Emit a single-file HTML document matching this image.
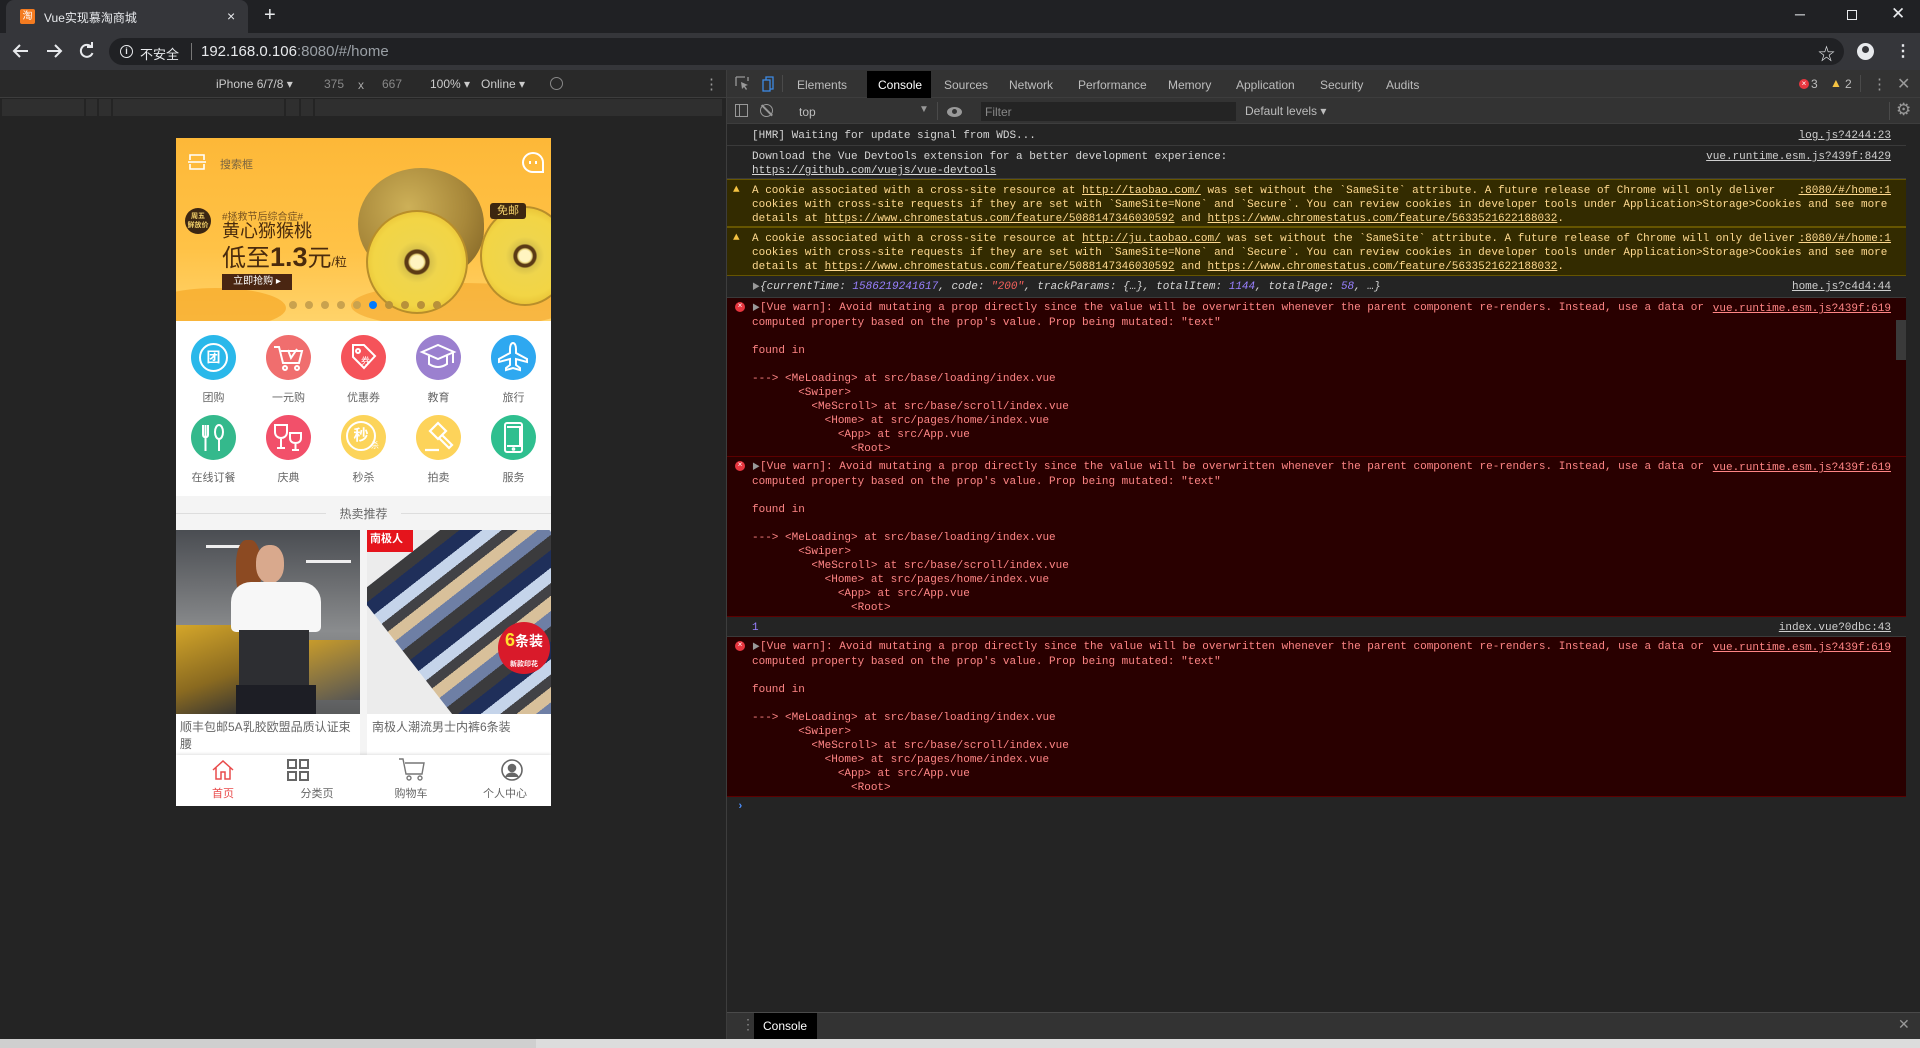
<!DOCTYPE html>
<html><head><meta charset="utf-8">
<style>
*{margin:0;padding:0;box-sizing:border-box}
body{width:1920px;height:1048px;overflow:hidden;background:#242424;font-family:"Liberation Sans","Noto Sans CJK SC",sans-serif;position:relative}
.a{position:absolute}
.ui{font-size:12px;color:#bdbdbd;white-space:nowrap}
.mono{font-family:"Liberation Mono","Noto Sans CJK SC",monospace;font-size:11px;line-height:14px;white-space:pre}
.row{position:absolute;left:727px;right:14px;padding:4px 0 3px 25px}
.n{color:#d6d6d6;border-bottom:1px solid #3a3a3a}
.w{background:#332b00;color:#ffd98f;border-top:1px solid #665500;border-bottom:1px solid #665500}
.e{background:#290000;color:#ff8585;border-bottom:1px solid #5c0000;padding-top:3px}
.lk{position:absolute;right:15px;top:4px;text-decoration:underline;color:#cfcfcf}
.e .lk,.w .lk{color:inherit}
u{text-decoration:underline}
.ic{position:absolute;width:45px;height:45px;border-radius:50%}
.lbl{position:absolute;width:75px;text-align:center;font-size:11px;color:#666}
.flesh{position:absolute;border-radius:50%;background:radial-gradient(circle,#fff4c0 0 9%,#e8d47a 11%,#5b3a15 13% 17%,#d9c24a 19%,#efd54c 30%,#f2d545 62%,#e4b92f 85%,#c99a26 100%)}
</style></head><body>

<!-- tab strip -->
<div class="a" style="left:0;top:0;width:1920px;height:33px;background:#202124"></div>
<div class="a" style="left:6px;top:0;width:242px;height:33px;background:#35363a;border-radius:8px 8px 0 0"></div>
<div class="a" style="left:20px;top:9px;width:15px;height:15px;background:#f47b20;border-radius:2px;color:#fff;font-size:10px;line-height:15px;text-align:center">淘</div>
<div class="a ui" style="left:44px;top:9px;color:#e8eaed">Vue实现慕淘商城</div>
<div class="a ui" style="left:227px;top:8px;color:#e8eaed;font-size:14px">×</div>
<div class="a ui" style="left:264px;top:4px;color:#e8eaed;font-size:20px">+</div>
<div class="a ui" style="left:1795px;top:6px;color:#e8eaed;font-size:14px">─</div>
<div class="a" style="left:1847px;top:10px;width:10px;height:10px;border:1px solid #e8eaed"></div>
<div class="a ui" style="left:1891px;top:4px;color:#e8eaed;font-size:17px">✕</div>

<!-- address bar -->
<div class="a" style="left:0;top:33px;width:1920px;height:37px;background:#35363a"></div>
<svg class="a" style="left:0;top:33px" width="108" height="37" viewBox="0 0 108 37" fill="none" stroke="#e8eaed" stroke-width="2"><path d="M28 18H14M20 12l-6 6 6 6"/><path d="M47 18h14M55 12l6 6-6 6"/><path d="M91 13.5a6 6 0 1 0 1.5 6.5"/><path d="M92 9v5h-5"/></svg>
<div class="a" style="left:109px;top:38px;width:1735px;height:27px;background:#202124;border-radius:14px"></div>
<div class="a" style="left:120px;top:45px;width:13px;height:13px;border:1.5px solid #e8eaed;border-radius:50%;color:#e8eaed;font-size:9px;line-height:10px;text-align:center;font-weight:bold">i</div>
<div class="a ui" style="left:140px;top:44px;color:#e8eaed;font-size:13px">不安全</div>
<div class="a" style="left:191px;top:43px;width:1px;height:17px;background:#777"></div>
<div class="a ui" style="left:201px;top:43px;font-size:15px;color:#e8eaed">192.168.0.106<span style="color:#9aa0a6">:8080/#/home</span></div>
<div class="a ui" style="left:1818px;top:40px;color:#e8eaed;font-size:17px">☆</div>
<div class="a" style="left:1857px;top:43px;width:17px;height:17px;border-radius:50%;background:#e8eaed"></div>
<div class="a" style="left:1862px;top:46px;width:7px;height:7px;border-radius:50%;background:#35363a"></div>
<div class="a ui" style="left:1895px;top:41px;color:#e8eaed;font-size:16px;font-weight:bold">⋮</div>

<!-- left device area -->
<div class="a" style="left:0;top:70px;width:726px;height:28px;background:#292929;border-bottom:1px solid #3d3d3d"></div>
<div class="a ui" style="left:216px;top:77px;color:#ccc">iPhone 6/7/8 ▾</div>
<div class="a ui" style="left:324px;top:77px;color:#888">375</div>
<div class="a ui" style="left:358px;top:78px;color:#aaa">x</div>
<div class="a ui" style="left:382px;top:77px;color:#888">667</div>
<div class="a ui" style="left:430px;top:77px;color:#ccc">100% ▾</div>
<div class="a ui" style="left:481px;top:77px;color:#ccc">Online ▾</div>
<div class="a" style="left:550px;top:77px;width:13px;height:13px;border:1.5px solid #888;border-radius:50%;transform:rotate(45deg)"></div>
<div class="a ui" style="left:704px;top:75px;color:#999;font-size:15px">⋮</div>
<div class="a" style="left:2px;top:99px;width:720px;height:17px;background:#2f2f2f"></div>
<div class="a" style="left:84px;top:99px;width:2px;height:17px;background:#242424"></div>
<div class="a" style="left:97px;top:99px;width:2px;height:17px;background:#242424"></div>
<div class="a" style="left:111px;top:99px;width:2px;height:17px;background:#242424"></div>
<div class="a" style="left:284px;top:99px;width:2px;height:17px;background:#242424"></div>
<div class="a" style="left:299px;top:99px;width:2px;height:17px;background:#242424"></div>
<div class="a" style="left:313px;top:99px;width:2px;height:17px;background:#242424"></div>

<!-- PHONE -->
<div class="a" style="left:176px;top:138px;width:375px;height:668px;background:#fff;overflow:hidden">
  <!-- banner -->
  <div class="a" style="left:0;top:0;width:375px;height:183px;background:linear-gradient(180deg,#fdb838 0%,#ffc246 60%,#ffd36a 100%);overflow:hidden">
    <div class="a" style="left:-30px;top:150px;width:140px;height:40px;border-radius:50%;background:#f6a826;opacity:.7"></div>
    <div class="a" style="left:175px;top:145px;width:220px;height:45px;border-radius:50%;background:#f3a52a;opacity:.6"></div>
    <div class="a" style="left:182px;top:30px;width:126px;height:112px;border-radius:50% 50% 45% 50%;background:radial-gradient(circle at 40% 35%,#cdb058,#a8883a 55%,#7f6224 95%)"></div>
    <div class="flesh" style="left:190px;top:72px;width:102px;height:104px;border:2px solid #b88e2a"></div>
    <div class="flesh" style="left:304px;top:68px;width:90px;height:100px;border:2px solid #b88e2a"></div>
    <div class="a" style="left:314px;top:65px;width:36px;height:16px;background:#3d2710;border-radius:3px;color:#f5d36c;font-size:11px;line-height:16px;text-align:center">免邮</div>
  </div>
  <svg class="a" style="left:11px;top:14px" width="20" height="20" viewBox="0 0 20 20" fill="none" stroke="#fff" stroke-width="1.6"><path d="M3 8V3h14v5M3 12v5h14v-5M1 10h18"/></svg>
  <div class="a" style="left:44px;top:18px;font-size:11px;color:#7a6440">搜索框</div>
  <div class="a" style="left:346px;top:14px;width:22px;height:21px;border:2px solid #fff;border-radius:50% 50% 50% 0/50% 50% 50% 40%;transform:scaleX(-1)"></div>
  <div class="a" style="left:353px;top:23px;width:2px;height:3px;background:#fff"></div><div class="a" style="left:359px;top:23px;width:2px;height:3px;background:#fff"></div>
  <div class="a" style="left:9px;top:70px;width:26px;height:26px;border-radius:50%;background:#3b2612;color:#f3d06a;font-size:7px;line-height:9px;text-align:center;padding-top:4px;font-weight:bold">周五<br>鲜放价</div>
  <div class="a" style="left:46px;top:70px;font-size:10px;color:#7a5420">#拯救节后综合症#</div>
  <div class="a" style="left:46px;top:82px;font-size:18px;line-height:22px;color:#4a2b0d">黄心猕猴桃</div>
  <div class="a" style="left:46px;top:106px;font-size:24px;color:#4a2b0d;white-space:nowrap;line-height:26px">低至<b style="font-size:27px">1.3</b>元<span style="font-size:12px">/粒</span></div>
  <div class="a" style="left:46px;top:136px;width:70px;height:16px;background:#4a2612;color:#fff;font-size:10px;line-height:16px;text-align:center">立即抢购 ▸</div>
  <div class="a" style="left:113px;top:163px;width:155px;height:8px;display:flex;gap:8px">
    <i style="width:8px;height:8px;border-radius:50%;background:#c9a24e"></i><i style="width:8px;height:8px;border-radius:50%;background:#c9a24e"></i><i style="width:8px;height:8px;border-radius:50%;background:#c9a24e"></i><i style="width:8px;height:8px;border-radius:50%;background:#c9a24e"></i><i style="width:8px;height:8px;border-radius:50%;background:#c9a24e"></i><i style="width:8px;height:8px;border-radius:50%;background:#007aff"></i><i style="width:8px;height:8px;border-radius:50%;background:#b8913a"></i><i style="width:8px;height:8px;border-radius:50%;background:#b8913a"></i><i style="width:8px;height:8px;border-radius:50%;background:#b8913a"></i><i style="width:8px;height:8px;border-radius:50%;background:#b8913a"></i>
  </div>

  <!-- icons -->
  <div class="ic" style="left:15px;top:197px;background:#2ab8ea"><div class="a" style="left:8px;top:8px;width:29px;height:29px;border:2px solid #fff;border-radius:50%;color:#fff;font-size:14px;line-height:25px;text-align:center;font-weight:bold">团</div></div>
  <div class="ic" style="left:90px;top:197px;background:#f06e6e"><svg width="45" height="45" fill="none" stroke="#fff" stroke-width="2"><path d="M8 12h5l4 16h16l3-12H15"/><circle cx="19" cy="33" r="2"/><circle cx="31" cy="33" r="2"/><path d="M22 15l3 8 6-9"/></svg></div>
  <div class="ic" style="left:165px;top:197px;background:#f5535a"><svg width="45" height="45" fill="none" stroke="#fff" stroke-width="2"><path d="M12 10h11l11 11-11 12-11-11z"/><circle cx="17" cy="16" r="2"/><text x="20" y="29" fill="#fff" stroke="none" font-size="9" font-family="Noto Sans CJK SC">券</text></svg></div>
  <div class="ic" style="left:240px;top:197px;background:#9b80cf"><svg width="45" height="45" fill="none" stroke="#fff" stroke-width="2"><path d="M6 17l16-7 16 7-16 7z"/><path d="M13 21v8c6 4 12 4 18 0v-8M37 18v10"/></svg></div>
  <div class="ic" style="left:315px;top:197px;background:#2ea8f0"><svg width="45" height="45" fill="none" stroke="#fff" stroke-width="2"><path d="M22 8c2 0 3 3 3 6v4l11 6v3l-11-3v6l4 3v2l-7-2-7 2v-2l4-3v-6L8 27v-3l11-6v-4c0-3 1-6 3-6z"/></svg></div>
  <div class="lbl" style="left:0;top:251px">团购</div><div class="lbl" style="left:75px;top:251px">一元购</div><div class="lbl" style="left:150px;top:251px">优惠券</div><div class="lbl" style="left:225px;top:251px">教育</div><div class="lbl" style="left:300px;top:251px">旅行</div>
  <div class="ic" style="left:15px;top:277px;background:#34b98c"><svg width="45" height="45" fill="none" stroke="#fff" stroke-width="2"><path d="M12 10v10c0 3 5 3 5 0V10M14.5 10v26"/><ellipse cx="28" cy="17" rx="4" ry="7"/><path d="M28 24v12"/></svg></div>
  <div class="ic" style="left:90px;top:277px;background:#f2506a"><svg width="45" height="45" fill="none" stroke="#fff" stroke-width="2"><path d="M9 10h12v7c0 4-3 6-6 6s-6-2-6-6zM15 23v10M11 33h8M24 18h11v5c0 3-2 5-5.5 5S24 26 24 23zM29.5 28v7M26 35h7"/></svg></div>
  <div class="ic" style="left:165px;top:277px;background:#fcd45a"><div class="a" style="left:5px;top:6px;width:30px;height:30px;border:2px solid #fff;border-radius:50%;color:#fff;font-size:15px;line-height:26px;text-align:center;font-weight:bold">秒</div><div class="a" style="left:30px;top:25px;color:#fff;font-size:8px">杀</div></div>
  <div class="ic" style="left:240px;top:277px;background:#fdd35a"><svg width="45" height="45" fill="none" stroke="#fff" stroke-width="2.2"><path d="M14 16l8-8 8 8-8 8zM26 20l10 10-3 3-10-10M9 35h14"/></svg></div>
  <div class="ic" style="left:315px;top:277px;background:#2fbf8f"><svg width="45" height="45" fill="none" stroke="#fff" stroke-width="2"><rect x="14" y="8" width="17" height="29" rx="2"/><path d="M16 12h13v19H16"/><circle cx="22.5" cy="34" r="0.8"/></svg></div>
  <div class="lbl" style="left:0;top:331px">在线订餐</div><div class="lbl" style="left:75px;top:331px">庆典</div><div class="lbl" style="left:150px;top:331px">秒杀</div><div class="lbl" style="left:225px;top:331px">拍卖</div><div class="lbl" style="left:300px;top:331px">服务</div>

  <!-- hot -->
  <div class="a" style="left:0;top:358px;width:375px;height:310px;background:#f4f4f4"></div>
  <div class="a" style="left:0;top:375px;width:150px;height:1px;background:#ddd"></div>
  <div class="a" style="left:225px;top:375px;width:150px;height:1px;background:#ddd"></div>
  <div class="a" style="left:150px;top:367px;width:75px;text-align:center;font-size:12px;color:#666">热卖推荐</div>
  <div class="a" style="left:0;top:392px;width:184px;height:184px;background:linear-gradient(180deg,#4a4d52 0%,#6d6f72 30%,#8a8c8e 55%,#5a5b5c 100%);overflow:hidden">
    <div class="a" style="left:0;top:95px;width:70px;height:89px;background:linear-gradient(160deg,#d4a62a,#8a6a20 60%,#333)"></div>
    <div class="a" style="left:130px;top:110px;width:54px;height:60px;background:linear-gradient(160deg,#c99c2a,#555)"></div>
    <div class="a" style="left:30px;top:15px;width:45px;height:3px;background:#eee"></div>
    <div class="a" style="left:130px;top:30px;width:45px;height:3px;background:#eee"></div>
    <div class="a" style="left:60px;top:10px;width:25px;height:60px;border-radius:40%;background:#8c4a22"></div>
    <div class="a" style="left:80px;top:15px;width:28px;height:38px;border-radius:45%;background:#d9a98d"></div>
    <div class="a" style="left:55px;top:52px;width:90px;height:50px;border-radius:20px 20px 5px 5px;background:#f7f7f7"></div>
    <div class="a" style="left:63px;top:100px;width:70px;height:55px;background:#2d2e32"></div>
    <div class="a" style="left:60px;top:155px;width:80px;height:29px;background:#1d1e25"></div>
  </div>
  <div class="a" style="left:191px;top:392px;width:184px;height:184px;background:#ececec;overflow:hidden">
    <div class="a" style="left:45px;top:-20px;width:190px;height:240px;transform:rotate(-38deg);transform-origin:50% 50%;background:repeating-linear-gradient(180deg,#3b3b3d 0 12px,#1f2f5a 12px 26px,#c5d4ea 26px 38px,#424246 38px 48px,#d8c09a 48px 60px,#6e7fa5 60px 72px)"></div>
    <div class="a" style="left:0;top:0;width:46px;height:22px;background:#e5141c;color:#fff;font-size:11px;line-height:18px;padding-left:3px;font-weight:bold">南极人</div>
    <div class="a" style="left:131px;top:92px;width:52px;height:52px;border-radius:50%;background:#d91a2a;color:#fff;font-size:14px;font-weight:bold;text-align:center;line-height:20px;padding-top:8px"><span style="color:#ffe12e;font-size:18px">6</span>条装<br><span style="font-size:7px">新款印花</span></div>
  </div>
  <div class="a" style="left:0;top:576px;width:184px;height:41px;background:#fff;font-size:12px;color:#666;padding:5px 4px;line-height:17px">顺丰包邮5A乳胶欧盟品质认证束腰</div>
  <div class="a" style="left:191px;top:576px;width:184px;height:41px;background:#fff;font-size:12px;color:#666;padding:5px 5px;line-height:17px">南极人潮流男士内裤6条装</div>
  <!-- tabbar -->
  <div class="a" style="left:0;top:617px;width:375px;height:51px;background:#fff;box-shadow:0 -1px 3px rgba(0,0,0,.12)"></div>
  <svg class="a" style="left:35px;top:620px" width="24" height="24" fill="none" stroke="#e94b4b" stroke-width="1.5"><path d="M2 12L12 3l10 9M5 9v12h5v-7h4v7h5V9"/></svg>
  <svg class="a" style="left:110px;top:620px" width="24" height="24" fill="none" stroke="#666" stroke-width="2"><rect x="2" y="2" width="8" height="8"/><rect x="14" y="2" width="8" height="8"/><rect x="2" y="14" width="8" height="8"/><rect x="14" y="14" width="8" height="8"/></svg>
  <svg class="a" style="left:222px;top:619px" width="28" height="25" fill="none" stroke="#777" stroke-width="1.4"><path d="M1 2h4l3 15h16l2-11H7"/><circle cx="11" cy="21" r="2"/><circle cx="22" cy="21" r="2"/></svg>
  <svg class="a" style="left:324px;top:620px" width="24" height="24" fill="none" stroke="#666" stroke-width="1.6"><circle cx="12" cy="12" r="10"/><circle cx="12" cy="10" r="3.5" fill="#666"/><path d="M6 19c2-5 10-5 12 0" fill="#666"/></svg>
  <div class="a" style="left:0;top:647px;width:94px;text-align:center;font-size:11px;color:#e94b4b">首页</div>
  <div class="a" style="left:94px;top:647px;width:94px;text-align:center;font-size:11px;color:#666">分类页</div>
  <div class="a" style="left:188px;top:647px;width:94px;text-align:center;font-size:11px;color:#666">购物车</div>
  <div class="a" style="left:282px;top:647px;width:94px;text-align:center;font-size:11px;color:#666">个人中心</div>
</div>

<!-- DEVTOOLS -->
<div class="a" style="left:726px;top:70px;width:1194px;height:969px;background:#242424;border-left:1px solid #3d3d3d"></div>
<div class="a" style="left:727px;top:70px;width:1193px;height:28px;background:#333;border-bottom:1px solid #3d3d3d"></div>
<svg class="a" style="left:735px;top:76px" width="40" height="16" fill="none" stroke-width="1.3"><path d="M1 1h9M1 1v9M13 1v4" stroke="#999"/><path d="M6 6l7 3-3 1 2 3-1 1-2-3-2 2z" fill="#999" stroke="none"/><rect x="28" y="4" width="7" height="11" stroke="#3d8ae5"/><path d="M31 4V1h7v12h-3" stroke="#3d8ae5"/></svg>
<div class="a" style="left:782px;top:75px;width:1px;height:17px;background:#4a4a4a"></div>
<div class="a ui" style="left:797px;top:78px">Elements</div>
<div class="a" style="left:867px;top:71px;width:64px;height:27px;background:#000"></div>
<div class="a ui" style="left:878px;top:78px;color:#fff">Console</div>
<div class="a ui" style="left:944px;top:78px">Sources</div>
<div class="a ui" style="left:1009px;top:78px">Network</div>
<div class="a ui" style="left:1078px;top:78px">Performance</div>
<div class="a ui" style="left:1168px;top:78px">Memory</div>
<div class="a ui" style="left:1236px;top:78px">Application</div>
<div class="a ui" style="left:1320px;top:78px">Security</div>
<div class="a ui" style="left:1386px;top:78px">Audits</div>
<div class="a" style="left:1799px;top:79px;width:10px;height:10px;border-radius:50%;background:#e8363f;color:#fff;font-size:8px;line-height:10px;text-align:center">×</div>
<div class="a ui" style="left:1811px;top:77px">3</div>
<div class="a ui" style="left:1830px;top:76px;color:#f5c342">▲</div>
<div class="a ui" style="left:1845px;top:77px">2</div>
<div class="a" style="left:1860px;top:75px;width:1px;height:17px;background:#4a4a4a"></div>
<div class="a ui" style="left:1872px;top:75px;font-size:15px;color:#999">⋮</div>
<div class="a ui" style="left:1897px;top:74px;font-size:16px;color:#999">✕</div>

<div class="a" style="left:727px;top:98px;width:1193px;height:26px;background:#333;border-bottom:1px solid #3d3d3d"></div>
<div class="a" style="left:735px;top:104px;width:13px;height:13px;border:1.3px solid #999"></div>
<div class="a" style="left:739px;top:104px;width:1px;height:13px;background:#999"></div>
<div class="a" style="left:760px;top:104px;width:13px;height:13px;border:1.5px solid #999;border-radius:50%"></div>
<div class="a" style="left:766px;top:103px;width:1.5px;height:15px;background:#999;transform:rotate(-45deg)"></div>
<div class="a ui" style="left:799px;top:105px">top</div>
<div class="a ui" style="left:919px;top:104px;color:#999;font-size:10px">▼</div>
<div class="a" style="left:937px;top:102px;width:1px;height:18px;background:#4a4a4a"></div>
<div class="a" style="left:947px;top:107px;width:15px;height:10px;border-radius:50%;background:#999"></div>
<div class="a" style="left:952px;top:109px;width:5px;height:5px;border-radius:50%;background:#333"></div>
<div class="a" style="left:981px;top:102px;width:255px;height:19px;background:#242424"></div>
<div class="a ui" style="left:985px;top:105px;color:#888">Filter</div>
<div class="a ui" style="left:1245px;top:104px">Default levels ▾</div>
<div class="a" style="left:1889px;top:102px;width:1px;height:18px;background:#4a4a4a"></div>
<div class="a ui" style="left:1896px;top:100px;font-size:17px;color:#999">⚙</div>

<!-- messages -->
<div class="row n mono" style="top:125px;height:21px">[HMR] Waiting for update signal from WDS...<span class="lk">log.js?4244:23</span></div>
<div class="row n mono" style="top:146px;height:33px">Download the Vue Devtools extension for a better development experience:
<u>https://github.com/vuejs/vue-devtools</u><span class="lk">vue.runtime.esm.js?439f:8429</span></div>
<div class="row w mono" style="top:179px;height:48px"><span class="a" style="left:6px;top:3px;color:#f5c342">▲</span>A cookie associated with a cross-site resource at <u>http://taobao.com/</u> was set without the `SameSite` attribute. A future release of Chrome will only deliver
cookies with cross-site requests if they are set with `SameSite=None` and `Secure`. You can review cookies in developer tools under Application&gt;Storage&gt;Cookies and see more
details at <u>https://www.chromestatus.com/feature/5088147346030592</u> and <u>https://www.chromestatus.com/feature/5633521622188032</u>.<span class="lk">:8080/#/home:1</span></div>
<div class="row w mono" style="top:227px;height:49px"><span class="a" style="left:6px;top:3px;color:#f5c342">▲</span>A cookie associated with a cross-site resource at <u>http://ju.taobao.com/</u> was set without the `SameSite` attribute. A future release of Chrome will only deliver
cookies with cross-site requests if they are set with `SameSite=None` and `Secure`. You can review cookies in developer tools under Application&gt;Storage&gt;Cookies and see more
details at <u>https://www.chromestatus.com/feature/5088147346030592</u> and <u>https://www.chromestatus.com/feature/5633521622188032</u>.<span class="lk">:8080/#/home:1</span></div>
<div class="row n mono" style="top:276px;height:22px;font-style:italic"><span style="font-style:normal;color:#999;font-size:8px">▶</span>{currentTime: <span style="color:#9980ff">1586219241617</span>, code: <span style="color:#f4605b">"200"</span>, trackParams: {…}, totalItem: <span style="color:#9980ff">1144</span>, totalPage: <span style="color:#9980ff">58</span>, …}<span class="lk" style="font-style:normal">home.js?c4d4:44</span></div>
<div class="row e mono" style="top:298px;height:159px"><span class="a" style="left:8px;top:4px;width:10px;height:10px;border-radius:50%;background:#e8363f;color:#fff;font-size:8px;line-height:10px;text-align:center">×</span><span style="color:#999;font-size:8px">▶</span>[Vue warn]: Avoid mutating a prop directly since the value will be overwritten whenever the parent component re-renders. Instead, use a data or
computed property based on the prop's value. Prop being mutated: "text"

found in

---&gt; &lt;MeLoading&gt; at src/base/loading/index.vue
       &lt;Swiper&gt;
         &lt;MeScroll&gt; at src/base/scroll/index.vue
           &lt;Home&gt; at src/pages/home/index.vue
             &lt;App&gt; at src/App.vue
               &lt;Root&gt;<span class="lk">vue.runtime.esm.js?439f:619</span></div>
<div class="row e mono" style="top:457px;height:160px"><span class="a" style="left:8px;top:4px;width:10px;height:10px;border-radius:50%;background:#e8363f;color:#fff;font-size:8px;line-height:10px;text-align:center">×</span><span style="color:#999;font-size:8px">▶</span>[Vue warn]: Avoid mutating a prop directly since the value will be overwritten whenever the parent component re-renders. Instead, use a data or
computed property based on the prop's value. Prop being mutated: "text"

found in

---&gt; &lt;MeLoading&gt; at src/base/loading/index.vue
       &lt;Swiper&gt;
         &lt;MeScroll&gt; at src/base/scroll/index.vue
           &lt;Home&gt; at src/pages/home/index.vue
             &lt;App&gt; at src/App.vue
               &lt;Root&gt;<span class="lk">vue.runtime.esm.js?439f:619</span></div>
<div class="row n mono" style="top:617px;height:20px;color:#9980ff">1<span class="lk">index.vue?0dbc:43</span></div>
<div class="row e mono" style="top:637px;height:160px"><span class="a" style="left:8px;top:4px;width:10px;height:10px;border-radius:50%;background:#e8363f;color:#fff;font-size:8px;line-height:10px;text-align:center">×</span><span style="color:#999;font-size:8px">▶</span>[Vue warn]: Avoid mutating a prop directly since the value will be overwritten whenever the parent component re-renders. Instead, use a data or
computed property based on the prop's value. Prop being mutated: "text"

found in

---&gt; &lt;MeLoading&gt; at src/base/loading/index.vue
       &lt;Swiper&gt;
         &lt;MeScroll&gt; at src/base/scroll/index.vue
           &lt;Home&gt; at src/pages/home/index.vue
             &lt;App&gt; at src/App.vue
               &lt;Root&gt;<span class="lk">vue.runtime.esm.js?439f:619</span></div>
<div class="a mono" style="left:737px;top:800px;color:#4d90fe;font-weight:bold">›</div>
<div class="a" style="left:1896px;top:320px;width:10px;height:40px;background:#3a3a3a"></div>

<!-- drawer -->
<div class="a" style="left:727px;top:1012px;width:1193px;height:27px;background:#333;border-top:1px solid #4a4a4a"></div>
<div class="a ui" style="left:741px;top:1016px;color:#888;font-size:14px">⋮</div>
<div class="a" style="left:754px;top:1013px;width:63px;height:26px;background:#000"></div>
<div class="a ui" style="left:763px;top:1019px;color:#fff">Console</div>
<div class="a ui" style="left:1898px;top:1016px;color:#999;font-size:14px">✕</div>

<div class="a" style="left:0;top:1039px;width:1920px;height:9px;background:#dcdcdc"></div>
<div class="a" style="left:0;top:1039px;width:536px;height:9px;background:#cfcfcf"></div>
</body></html>
